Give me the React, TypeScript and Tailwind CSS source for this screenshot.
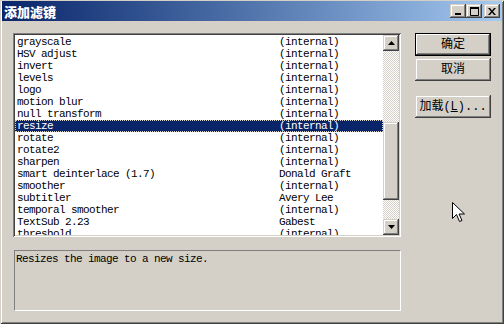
import React from "react";

const rows: [string, string][] = [
  ["grayscale", "(internal)"],
  ["HSV adjust", "(internal)"],
  ["invert", "(internal)"],
  ["levels", "(internal)"],
  ["logo", "(internal)"],
  ["motion blur", "(internal)"],
  ["null transform", "(internal)"],
  ["resize", "(internal)"],
  ["rotate", "(internal)"],
  ["rotate2", "(internal)"],
  ["sharpen", "(internal)"],
  ["smart deinterlace (1.7)", "Donald Graft"],
  ["smoother", "(internal)"],
  ["subtitler", "Avery Lee"],
  ["temporal smoother", "(internal)"],
  ["TextSub 2.23", "Gabest"],
  ["threshold", "(internal)"],
];

const raised =
  "bg-[#d4d0c8] shadow-[inset_-1px_-1px_0_#404040,inset_1px_1px_0_#d4d0c8,inset_-2px_-2px_0_#808080,inset_2px_2px_0_#ffffff]";

const TitleButton = ({ children, className = "" }: { children: React.ReactNode; className?: string }) => (
  <div className={`w-[16px] h-[14px] flex items-center justify-center ${raised} ${className}`}>{children}</div>
);

const Button = ({ children, def }: { children: React.ReactNode; def?: boolean }) => (
  <div
    className={`w-[76px] h-[23px] flex items-center justify-center text-[12px] text-black ${
      def
        ? "bg-[#d4d0c8] shadow-[inset_0_0_0_1px_#000000,inset_-2px_-2px_0_#404040,inset_2px_2px_0_#ffffff,inset_-3px_-3px_0_#808080]"
        : raised
    }`}
    style={{ fontFamily: '"Liberation Mono", "Noto Sans CJK SC", monospace' }}
  >
    {children}
  </div>
);

export default function App() {
  return (
    <div className="w-[504px] h-[324px] bg-[#d4d0c8] relative overflow-hidden flex flex-col pt-[1px] px-[2px] shadow-[inset_1px_1px_0_#d4d0c8,inset_-1px_-1px_0_#404040,inset_2px_2px_0_#ffffff,inset_-2px_-2px_0_#808080]">
      {/* title bar */}
      <div className="h-[20px] flex items-center justify-between bg-gradient-to-r from-[#0a246a] to-[#a6caf0] pl-[2px] pr-[2px]">
        <span
          className="text-white font-black text-[13px] leading-none"
          style={{ fontFamily: '"Noto Sans CJK SC", sans-serif' }}
        >
          添加滤镜
        </span>
        <div className="flex items-center">
          <TitleButton>
            <svg width="8" height="8" viewBox="0 0 8 8">
              <rect x="1" y="6" width="6" height="2" fill="#000" />
            </svg>
          </TitleButton>
          <TitleButton>
            <svg width="9" height="9" viewBox="0 0 9 9">
              <path d="M0.5 0.5h8v8h-8z" fill="none" stroke="#000" />
              <rect x="0" y="0" width="9" height="2" fill="#000" />
            </svg>
          </TitleButton>
          <TitleButton className="ml-[2px]">
            <svg width="8" height="7" viewBox="0 0 8 7">
              <path d="M0 0h2l2 2.5 2-2.5h2l-3 3.5 3 3.5h-2l-2-2.5-2 2.5h-2l3-3.5z" fill="#000" />
            </svg>
          </TitleButton>
        </div>
      </div>

      {/* body */}
      <div className="flex pl-[11px] pt-[12px]">
        <div className="flex flex-col w-[388px]">
          {/* list box */}
          <div className="w-[388px] h-[204px] flex p-[2px] bg-white shadow-[inset_1px_1px_0_#808080,inset_-1px_-1px_0_#ffffff,inset_2px_2px_0_#404040,inset_-2px_-2px_0_#d4d0c8]">
            <div
              className="flex-1 overflow-hidden pt-[1px] text-[11px] tracking-[-0.6px] text-black"
              style={{ fontFamily: '"Liberation Mono", monospace' }}
            >
              {rows.map(([name, author]) => {
                const sel = name === "resize";
                return (
                  <div
                    key={name}
                    className={`h-[12px] leading-[12px] flex pl-[2px] whitespace-pre ${
                      sel ? "bg-[#0a246a] text-white outline-1 outline-dotted outline-[#d4d0c8] -outline-offset-1" : ""
                    }`}
                  >
                    <span className="w-[262px]">{name}</span>
                    <span>{author}</span>
                  </div>
                );
              })}
            </div>
            {/* scrollbar */}
            <div className="w-[16px] flex flex-col">
              <div className={`h-[16px] flex items-center justify-center ${raised}`}>
                <svg width="7" height="4" viewBox="0 0 7 4">
                  <path d="M3.5 0L7 4H0z" fill="#000" />
                </svg>
              </div>
              <div className="flex-1 bg-[repeating-conic-gradient(#ffffff_0%_25%,#d4d0c8_0%_50%)] bg-[length:2px_2px]">
                <div className={`mt-[71px] h-[78px] ${raised}`} />
              </div>
              <div className={`h-[16px] flex items-center justify-center ${raised}`}>
                <svg width="7" height="4" viewBox="0 0 7 4">
                  <path d="M0 0h7L3.5 4z" fill="#000" />
                </svg>
              </div>
            </div>
          </div>

          {/* description */}
          <div
            className="mt-[13px] h-[61px] w-[387px] ml-[1px] border-t border-l border-[#808080] border-b-white border-r-white border-b border-r pl-[1px] pt-[2px] text-[11px] tracking-[-0.6px] leading-[12px] text-black"
            style={{ fontFamily: '"Liberation Mono", monospace' }}
          >
            Resizes the image to a new size.
          </div>
        </div>

        {/* buttons */}
        <div className="ml-[14px] flex flex-col">
          <Button def>确定</Button>
          <div className="mt-[2px]">
            <Button>取消</Button>
          </div>
          <div className="mt-[14px]">
            <Button>
              加载(<span className="underline">L</span>)...
            </Button>
          </div>
        </div>
      </div>

      {/* mouse pointer */}
      <svg className="absolute left-[452px] top-[202px]" width="13" height="21" viewBox="0 0 13 21">
        <path
          d="M0.5 0.5v16l4-4 3 7 2.5-1-3-6.5h5.5z"
          fill="#fff"
          stroke="#000"
          strokeWidth="1"
          strokeLinejoin="miter"
        />
      </svg>
    </div>
  );
}
